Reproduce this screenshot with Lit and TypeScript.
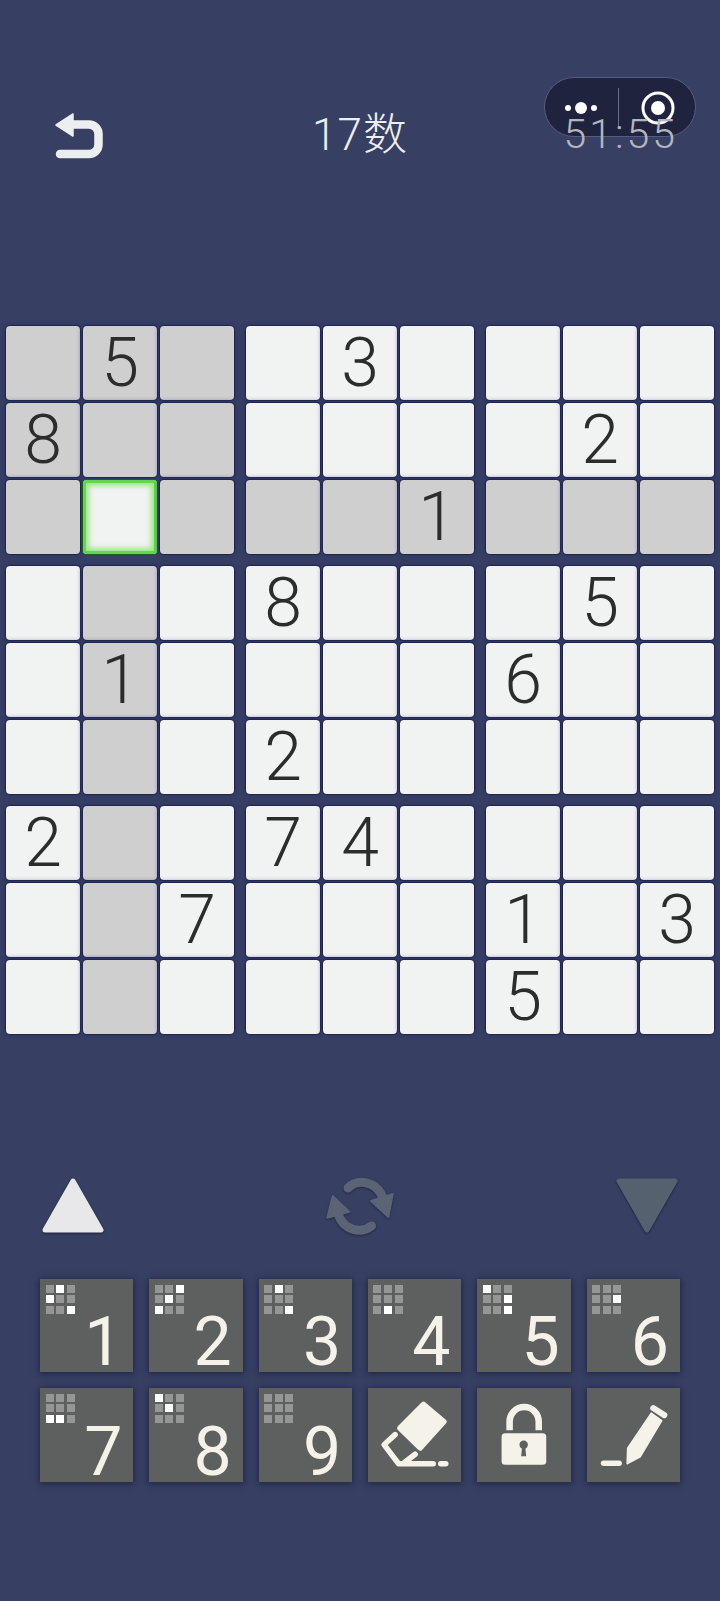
import { LitElement, html, css, svg } from "lit";
import { customElement } from "lit/decorators.js";
import { classMap } from "lit/directives/class-map.js";

const BOARD = [
  "050030000",
  "800000020",
  "000001000",
  "000800050",
  "010000600",
  "000200000",
  "200740000",
  "007000103",
  "000000500",
];
const SEL_R = 2;
const SEL_C = 1;

const MARKS: Record<number, number[]> = {
  1: [1, 3, 8],
  2: [2, 4, 6],
  3: [1, 8],
  4: [7],
  5: [0, 5, 8],
  6: [5],
  7: [6, 7],
  8: [0, 4],
  9: [],
};

const eraser = svg`<svg class="ico" viewBox="0 0 93 93"><path d="M55.3 16 76 33.5 52 60 31.5 40Z" fill="#f5f2ea" stroke="#f5f2ea" stroke-width="5" stroke-linejoin="round"/><path d="M27 46.5 16 56.5 30.5 75.5H65M47 66 36 74.5" fill="none" stroke="#f5f2ea" stroke-width="5.5" stroke-linecap="round" stroke-linejoin="round"/><path d="M72.5 75.5H77.5" fill="none" stroke="#f5f2ea" stroke-width="5.5" stroke-linecap="round"/></svg>`;
const lock = svg`<svg class="ico" viewBox="0 0 93 93"><path d="M32.5 42V33.5A14.500 14.500 0 0 1 61.500 33.500V42" fill="none" stroke="#f5f2ea" stroke-width="6.500"/><rect x="24.500" y="45" width="44.500" height="31.500" rx="3.500" fill="#f5f2ea"/><circle cx="46.500" cy="56.500" r="4.200" fill="#5e605f"/><path d="M45 58H48L49 68H44Z" fill="#5e605f"/></svg>`;
const pencil = svg`<svg class="ico" viewBox="0 0 93 93"><path d="M16.500 75H32" fill="none" stroke="#f5f2ea" stroke-width="5.500" stroke-linecap="round"/><path d="M40 75.500 40.500 60 64 25 74.500 32.500 53 68.500Z" fill="#f5f2ea" stroke="#f5f2ea" stroke-width="1.500" stroke-linejoin="round"/><path d="M66 20 77 27" fill="none" stroke="#f5f2ea" stroke-width="6" stroke-linecap="round"/></svg>`;

@customElement("app-root")
export class AppRoot extends LitElement {
  static styles = css`
    :host {
      display: block;
      width: 720px;
      height: 1601px;
      background: #373f63;
      overflow: hidden;
      font-family: Roboto, "Noto Sans CJK SC", sans-serif;
    }
    .page {
      position: relative;
      display: flex;
      flex-direction: column;
    }
    .header {
      position: relative;
      height: 326px;
      box-sizing: border-box;
      padding-top: 108px;
      display: grid;
      grid-template-columns: 1fr auto 1fr;
      align-items: start;
    }
    .back {
      width: 60px;
      height: 60px;
      margin-left: 50px;
      display: block;
    }
    .title {
      margin-top: -4px;
      font-size: 44px;
      line-height: 62px;
      font-weight: 300;
      letter-spacing: 1px;
      color: #eceef0;
    }
    .timer {
      justify-self: end;
      margin-right: 42px;
      margin-top: -5px;
      font-size: 41px;
      line-height: 62px;
      font-weight: 300;
      letter-spacing: 3px;
      color: #b4b6bd;
    }
    .capsule {
      position: absolute;
      left: 544px;
      top: 77px;
      width: 152px;
      height: 60px;
      box-sizing: border-box;
      border-radius: 30px;
      background: rgba(30, 33, 58, 0.93);
      border: 1px solid #565c7a;
      display: flex;
      align-items: center;
    }
    .capsule svg {
      display: block;
      width: 152px;
      height: 60px;
      margin: -1px;
    }
    .board {
      margin-left: 6px;
      display: grid;
      grid-template-columns: repeat(3, 228px);
      gap: 12px;
    }
    .block {
      display: grid;
      grid-template-columns: repeat(3, 74px);
      grid-auto-rows: 74px;
      gap: 3px;
    }
    .cell {
      box-sizing: border-box;
      border-radius: 4px;
      background: #f1f2f2;
      box-shadow: 0 0 0 1px #20264a, 0 0 4px 2px rgba(36, 50, 110, 0.55);
      display: flex;
      align-items: center;
      justify-content: center;
      font-size: 68px;
      font-weight: 300;
      line-height: 74px;
      color: #2c2c2c;
    }
    .cell.hl {
      background: #cfcfcf;
    }
    .cell.sel {
      box-shadow: 0 0 0 1px #1f5a2a, inset 0 0 0 3px #62d74a, inset 0 0 5px 6px #9be88a;
    }
    .tools {
      margin-top: 144px;
      padding: 0 42px;
      height: 55px;
      display: flex;
      justify-content: space-between;
      align-items: center;
    }
    .tri {
      width: 62px;
      height: 55px;
      display: block;
      overflow: visible;
      filter: drop-shadow(0 1px 1px rgba(20, 25, 50, 0.8));
    }
    .sync {
      width: 80px;
      height: 70px;
      display: block;
      overflow: visible;
      filter: drop-shadow(0 1px 1px rgba(20, 25, 50, 0.6));
    }
    .keys {
      margin-top: 46px;
      padding: 0 40px;
      display: grid;
      grid-template-columns: repeat(6, 93.33px);
      grid-auto-rows: 93.33px;
      gap: 16px;
    }
    .key {
      position: relative;
      background: #5e605f;
      box-shadow: 0 1px 6px 1px rgba(20, 24, 50, 0.6);
      color: #f5f2ea;
      font-size: 68px;
      font-weight: 400;
    }
    .num {
      position: absolute;
      right: 0;
      bottom: 0;
      width: 60px;
      height: 60px;
      line-height: 60px;
      text-align: center;
    }
    .mini {
      position: absolute;
      left: 5.500px;
      top: 5.500px;
      display: grid;
      grid-template-columns: repeat(3, 8px);
      grid-auto-rows: 8px;
      gap: 2.670px;
    }
    .mini i {
      display: block;
      background: #969696;
    }
    .mini i.on {
      background: #fff;
    }
    .ico {
      display: block;
      width: 100%;
      height: 100%;
    }
  `;

  private cell(r: number, c: number) {
    const v = BOARD[r][c];
    const sel = r === SEL_R && c === SEL_C;
    const sameBlock = Math.floor(r / 3) === Math.floor(SEL_R / 3) && Math.floor(c / 3) === Math.floor(SEL_C / 3);
    const hl = !sel && (r === SEL_R || c === SEL_C || sameBlock);
    return html`<div class=${classMap({ cell: true, hl, sel })}>${v === "0" ? "" : v}</div>`;
  }

  private block(br: number, bc: number) {
    const cells = [];
    for (let r = 0; r < 3; r++) for (let c = 0; c < 3; c++) cells.push(this.cell(br * 3 + r, bc * 3 + c));
    return html`<div class="block">${cells}</div>`;
  }

  private numKey(n: number) {
    const on = MARKS[n];
    return html`<div class="key">
      <div class="mini">
        ${[0, 1, 2, 3, 4, 5, 6, 7, 8].map((i) => html`<i class=${on.includes(i) ? "on" : ""}></i>`)}
      </div>
      <div class="num">${n}</div>
    </div>`;
  }

  render() {
    const blocks = [];
    for (let br = 0; br < 3; br++) for (let bc = 0; bc < 3; bc++) blocks.push(this.block(br, bc));
    return html`<div class="page">
      <div class="capsule">
        <svg viewBox="0 0 152 60">
          <circle cx="37" cy="31" r="6" fill="#fff" />
          <circle cx="24" cy="31" r="3" fill="#fff" />
          <circle cx="50" cy="31" r="3" fill="#fff" />
          <path d="M74.500 11V50" stroke="#6a6f88" stroke-width="1" />
          <circle cx="114" cy="31" r="15" fill="none" stroke="#fff" stroke-width="3" />
          <circle cx="114" cy="31" r="7" fill="#fff" />
        </svg>
      </div>
      <div class="header">
        <svg class="back" viewBox="0 0 60 60">
          <path d="M6 17 23 6V28Z" fill="#eceef0" stroke="#eceef0" stroke-width="1.500" stroke-linejoin="round" />
          <path d="M20 16.500H39a9.500 9.500 0 0 1 9.500 9.500V36.500a9.500 9.500 0 0 1 -9.500 9.500H10" fill="none" stroke="#eceef0" stroke-width="8.500" stroke-linecap="round" />
        </svg>
        <div class="title">17数</div>
        <div class="timer">51:55</div>
      </div>
      <div class="board">${blocks}</div>
      <div class="tools">
        <svg class="tri" viewBox="0 0 62 55">
          <path d="M31 3 59 52H3Z" fill="#e8e8ea" stroke="#e8e8ea" stroke-width="5" stroke-linejoin="round" />
        </svg>
        <svg class="sync" viewBox="0 0 80 70">
          <path d="M28 17C37 8 56 9 63 27" fill="none" stroke="#5a6474" stroke-width="9" stroke-linecap="round" />
          <path d="M72.700 23 68.300 46 51 30Z" fill="#5a6474" stroke="#5a6474" stroke-width="2" stroke-linejoin="round" />
          <path d="M51.500 55C41 63 24 60 18 43" fill="none" stroke="#5a6474" stroke-width="9" stroke-linecap="round" />
          <path d="M12.700 25 29.300 40.700 7.300 46.700Z" fill="#5a6474" stroke="#5a6474" stroke-width="2" stroke-linejoin="round" />
        </svg>
        <svg class="tri" viewBox="0 0 62 55">
          <path d="M3 3H59L31 52Z" fill="#56616f" stroke="#56616f" stroke-width="5" stroke-linejoin="round" />
        </svg>
      </div>
      <div class="keys">
        ${[1, 2, 3, 4, 5, 6, 7, 8, 9].map((n) => this.numKey(n))}
        <div class="key">${eraser}</div>
        <div class="key">${lock}</div>
        <div class="key">${pencil}</div>
      </div>
    </div>`;
  }
}
